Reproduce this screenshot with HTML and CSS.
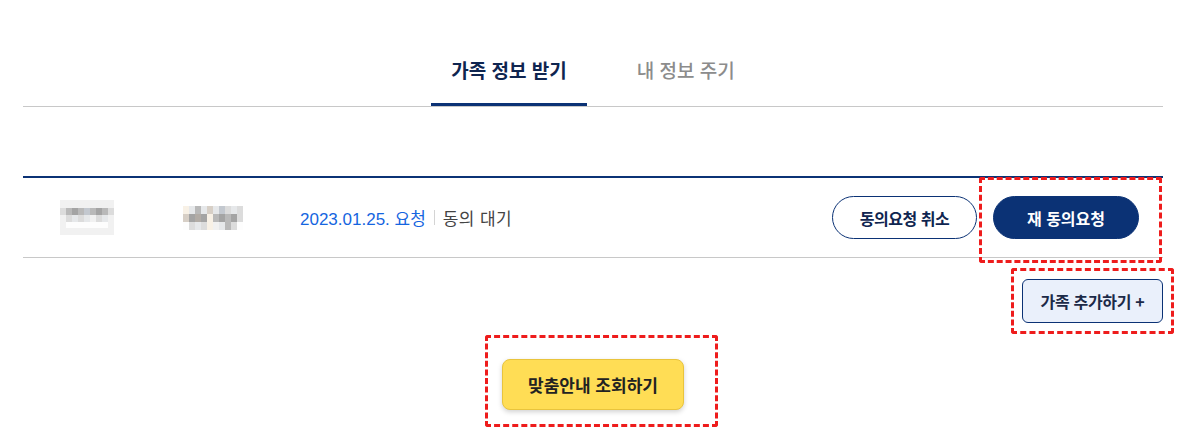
FILE: index.html
```html
<!DOCTYPE html>
<html lang="ko">

<head>
    <meta charset="UTF-8">
    <meta name="viewport" content="width=device-width, initial-scale=1.0">
    <title>가족 정보 받기</title>
    <link rel="stylesheet" href="styles.css">
</head>

<body>

    <div class="wrap">
        <ul class="tabs">
            <li class="tab active">가족 정보 받기</li>
            <li class="tab">내 정보 주기</li>
        </ul>

        <div class="family-list">
            <div class="family-row">
                <div class="cell cell-name">
                    <!-- masked name -->
                    <div class="mosaic mosaic-a">
                        <span class="s1"></span><span class="s1"></span><span class="s1"></span><span class="s1"></span><span class="s1"></span><span class="s1"></span><span class="s1"></span><span class="s1"></span><span class="s1"></span>
                        <span class="s2"></span><span class="s3"></span><span class="s4"></span><span class="s3"></span><span class="s5"></span><span class="s3"></span><span class="s4"></span><span class="s3"></span><span class="s2"></span>
                        <span class="s1"></span><span class="s2"></span><span class="s6"></span><span class="s2"></span><span class="s6"></span><span class="s1"></span><span class="s2"></span><span class="s6"></span><span class="s1"></span>
                        <span class="s1"></span><span class="s0"></span><span class="s0"></span><span class="s0"></span><span class="s0"></span><span class="s0"></span><span class="s0"></span><span class="s0"></span><span class="s1"></span>
                        <span class="s1"></span><span class="s1"></span><span class="s1"></span><span class="s1"></span><span class="s1"></span><span class="s1"></span><span class="s1"></span><span class="s1"></span><span class="s1"></span>
                    </div>
                </div>
                <div class="cell cell-rel">
                    <div class="mosaic mosaic-b">
                        <span class="b0"></span><span class="s6"></span><span class="s3"></span><span class="s6"></span><span class="b1"></span><span class="s6"></span><span class="s5"></span><span class="s2"></span><span class="s6"></span><span class="s2"></span>
                        <span class="b1"></span><span class="s4"></span><span class="b2"></span><span class="s4"></span><span class="b0"></span><span class="s3"></span><span class="s4"></span><span class="s3"></span><span class="s4"></span><span class="s2"></span>
                        <span class="s0"></span><span class="s2"></span><span class="s6"></span><span class="s2"></span><span class="b0"></span><span class="s1"></span><span class="s6"></span><span class="s3"></span><span class="s2"></span><span class="s0"></span>
                    </div>
                </div>
                <div class="cell cell-status">
                    <span class="req-date">2023.01.25. 요청</span>
                    <span class="status">동의 대기</span>
                </div>
                <div class="cell cell-actions">
                    <button class="btn-pill btn-line">동의요청 취소</button>
                    <button class="btn-pill btn-fill mark mark-resend">재 동의요청</button>
                </div>
            </div>
        </div>

        <div class="add-row">
            <button class="btn-add mark mark-add">가족 추가하기 +</button>
        </div>

        <div class="submit-row">
            <button class="btn-submit mark mark-submit">맞춤안내 조회하기</button>
        </div>
    </div>

</body>

</html>
```

FILE: styles.css
```css
body {
    margin: 0;
    font-family: "Noto Sans CJK KR", "Noto Sans", sans-serif;
    color: #222;
    background: #fff;
}

.wrap {
    width: 1140px;
    margin-left: 23px;
    padding-bottom: 21px;
}

button {
    font-family: inherit;
    cursor: pointer;
}

/* tabs */
.tabs {
    display: flex;
    justify-content: center;
    gap: 30px;
    list-style: none;
    margin: 40px 0 0;
    padding: 0;
    border-bottom: 1px solid #c8c8c8;
}

.tab {
    padding: 16px 20px 20px;
    font-size: 19px;
    line-height: 27px;
    font-weight: 500;
    color: #8c8c8c;
    border-bottom: 3px solid transparent;
}

.tab.active {
    font-weight: 700;
    color: #0f2550;
    border-bottom-color: #0b3275;
}

/* family list */
.family-list {
    margin-top: 69px;
    border-top: 2px solid #0b3275;
    border-bottom: 1px solid #c8c8c8;
}

.family-row {
    display: flex;
    align-items: center;
    height: 79px;
    padding-left: 37px;
    padding-right: 24px;
}

.cell-name {
    width: 123px;
}

.cell-rel {
    width: 117px;
}

.mosaic {
    display: grid;
    filter: blur(0.6px);
}

.mosaic span {
    display: block;
}

.mosaic-a {
    width: 54px;
    height: 35px;
    grid-template-columns: repeat(9, 6px);
    grid-template-rows: 8px 7px 7px 6px 7px;
}

.mosaic-b {
    width: 60px;
    height: 24px;
    margin-top: 1px;
    grid-template-columns: repeat(10, 6px);
    grid-template-rows: repeat(3, 8px);
}

.s0 { background: #fdfdfd; }
.s1 { background: #f1f1f1; }
.s2 { background: #dcdcdc; }
.s3 { background: #b9b9b9; }
.s4 { background: #a4a4a4; }
.s5 { background: #c3c8cf; }
.s6 { background: #e6e8ea; }
.b0 { background: #f8f1e6; }
.b1 { background: #d7cfc6; }
.b2 { background: #b2aca6; }

.cell-status {
    flex: 1;
    display: flex;
    align-items: center;
    font-size: 17px;
}

.req-date {
    font-family: "Liberation Sans", "Noto Sans CJK KR", sans-serif;
    color: #1565e0;
}

.status {
    color: #444;
    margin-left: 8px;
    padding-left: 8px;
    border-left: 1px solid #d4d4d4;
    line-height: 15px;
    letter-spacing: 0.4px;
}

.cell-actions {
    display: flex;
    gap: 16px;
}

.btn-pill {
    height: 43px;
    border-radius: 22px;
    font-size: 16px;
    font-weight: 700;
}

.btn-line {
    width: 145px;
    background: #fff;
    color: #0f2550;
    border: 1px solid #0b3275;
    letter-spacing: -0.5px;
}

.btn-fill {
    width: 146px;
    background: #0b3275;
    color: #fff;
    border: 1px solid #0b3275;
}

/* add button */
.add-row {
    display: flex;
    justify-content: flex-end;
    margin-top: 21px;
}

.btn-add {
    width: 141px;
    height: 44px;
    background: #eaf0fb;
    border: 1px solid #0b3275;
    border-radius: 6px;
    color: #1c2a48;
    font-size: 16px;
    font-weight: 700;
    letter-spacing: -0.3px;
}

/* submit */
.submit-row {
    display: flex;
    justify-content: center;
    margin-top: 36px;
}

.btn-submit {
    width: 182px;
    height: 51px;
    background: #ffdd55;
    border: 1px solid #e9c43c;
    border-radius: 8px;
    box-shadow: 0 2px 5px rgba(0, 0, 0, 0.18);
    color: #222;
    font-size: 17px;
    font-weight: 700;
}

/* red dashed review marks */
.mark {
    position: relative;
}

.mark::after {
    content: "";
    position: absolute;
    border: 3px dashed #ee1c1c;
    border-radius: 3px;
    pointer-events: none;
}

.mark-resend::after {
    left: -15px;
    right: -24px;
    top: -20px;
    bottom: -25px;
}

.mark-add::after {
    left: -12px;
    right: -12px;
    top: -12px;
    bottom: -12px;
}

.mark-submit::after {
    left: -18px;
    right: -35px;
    top: -25px;
    bottom: -18px;
}
```
